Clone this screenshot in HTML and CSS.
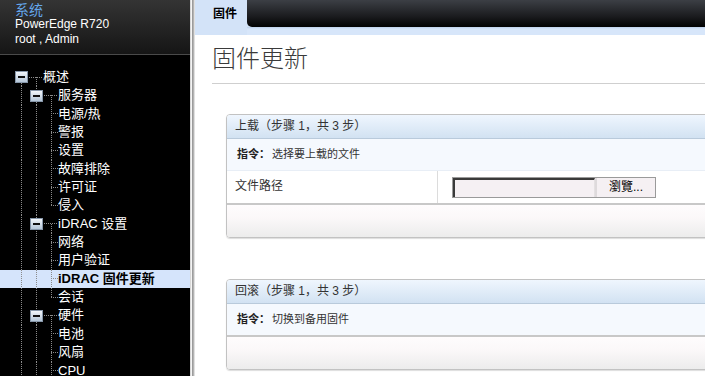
FILE: index.html
```html
<!DOCTYPE html>
<html lang="zh">
<head>
<meta charset="utf-8">
<title>固件更新</title>
<link rel="stylesheet" href="styles.css">
</head>
<body>
<div class="app">
  <aside class="sidebar">
    <div class="sys-head">
      <div class="sys-title">系统</div>
      <div class="sys-line">PowerEdge R720</div>
      <div class="sys-line">root , Admin</div>
    </div>
    <div class="tree">
      <div class="row"><span class="ic bot"><i class="box"></i></span><span class="conn down"></span><span class="lbl">概述</span></div>
      <div class="row"><span class="g v"></span><span class="ic v"><i class="box"></i></span><span class="conn down"></span><span class="lbl">服务器</span></div>
      <div class="row"><span class="g v"></span><span class="g v"></span><span class="lf v"></span><span class="lbl">电源/热</span></div>
      <div class="row"><span class="g v"></span><span class="g v"></span><span class="lf v"></span><span class="lbl">警报</span></div>
      <div class="row"><span class="g v"></span><span class="g v"></span><span class="lf v"></span><span class="lbl">设置</span></div>
      <div class="row"><span class="g v"></span><span class="g v"></span><span class="lf v"></span><span class="lbl">故障排除</span></div>
      <div class="row"><span class="g v"></span><span class="g v"></span><span class="lf v"></span><span class="lbl">许可证</span></div>
      <div class="row"><span class="g v"></span><span class="g v"></span><span class="lf end"></span><span class="lbl">侵入</span></div>
      <div class="row"><span class="g v"></span><span class="ic v"><i class="box"></i></span><span class="conn down"></span><span class="lbl">iDRAC 设置</span></div>
      <div class="row"><span class="g v"></span><span class="g v"></span><span class="lf v"></span><span class="lbl">网络</span></div>
      <div class="row"><span class="g v"></span><span class="g v"></span><span class="lf v"></span><span class="lbl">用户验证</span></div>
      <div class="row selected"><span class="g v"></span><span class="g v"></span><span class="lf v"></span><span class="lbl">iDRAC 固件更新</span></div>
      <div class="row"><span class="g v"></span><span class="g v"></span><span class="lf end"></span><span class="lbl">会话</span></div>
      <div class="row"><span class="g v"></span><span class="ic v"><i class="box"></i></span><span class="conn down"></span><span class="lbl">硬件</span></div>
      <div class="row"><span class="g v"></span><span class="g v"></span><span class="lf v"></span><span class="lbl">电池</span></div>
      <div class="row"><span class="g v"></span><span class="g v"></span><span class="lf v"></span><span class="lbl">风扇</span></div>
      <div class="row"><span class="g v"></span><span class="g v"></span><span class="lf v"></span><span class="lbl">CPU</span></div>
    </div>
  </aside>
  <div class="splitter"></div>
  <main class="main">
    <div class="tabbar">
      <div class="tab">固件</div>
      <div class="tabfill"></div>
    </div>
    <div class="content">
      <h1 class="page-title">固件更新</h1>
      <div class="panel">
        <div class="panel-head">上载（步骤 1，共 3 步）</div>
        <div class="instr"><b>指令：</b>选择要上载的文件</div>
        <div class="field-row">
          <div class="field-label">文件路径</div>
          <div class="field-value">
            <span class="file-input"><span class="file-text"></span><span class="file-btn">瀏覽...</span></span>
          </div>
        </div>
        <div class="panel-foot"></div>
      </div>
      <div class="panel second">
        <div class="panel-head">回滚（步骤 1，共 3 步）</div>
        <div class="instr"><b>指令：</b>切换到备用固件</div>
        <div class="panel-foot"></div>
      </div>
    </div>
  </main>
</div>
</body>
</html>
```
FILE: styles.css
```css
* { box-sizing: border-box; }
html, body { margin: 0; padding: 0; height: 100%; }
body {
  font-family: "Liberation Sans", "Noto Sans CJK SC", sans-serif;
  font-size: 12px;
  color: #222;
  background: #fff;
  overflow: hidden;
}
.app { display: flex; height: 376px; }

/* sidebar */
.sidebar { width: 190px; flex: none; background: #000; color: #fff; }
.sys-head {
  height: 55px;
  padding: 1px 0 0 15px;
  background: linear-gradient(#343434, #151515);
  border-bottom: 1px solid #4a4a4a;
}
.sys-title { font-family: "Noto Sans CJK SC", sans-serif; font-size: 14px; line-height: 16px; color: #64a6ea; }
.sys-line { font-size: 12px; line-height: 15px; color: #fff; }

.tree { padding-top: 13px; }
.row { display: flex; height: 18.35px; padding-left: 15px; align-items: stretch; }
.row .lbl {
  font-family: "Liberation Sans", "Noto Sans CJK SC", sans-serif;
  font-size: 13px;
  line-height: 18.35px;
  color: #fff;
  white-space: nowrap;
}
.row.selected { background: #d5e4fb; }
.row.selected .lbl { color: #000; font-weight: bold; }

.g { width: 15px; flex: none; }
.g.v, .ic.v, .lf.v {
  background: repeating-linear-gradient(to bottom, #8a8a8a 0 1px, transparent 1px 2px) 6px 0 / 1px 100% no-repeat;
}
.ic.bot {
  background: repeating-linear-gradient(to bottom, #8a8a8a 0 1px, transparent 1px 2px) 6px 100% / 1px 50% no-repeat;
}
.ic { width: 13px; flex: none; display: flex; align-items: center; }
.box {
  display: block;
  width: 13px; height: 12px;
  border: 1px solid #8797aa;
  background: linear-gradient(#f2f6fa, #b4c6d8);
  position: relative;
}
.box::after {
  content: "";
  position: absolute;
  left: 2px; right: 2px; top: 4px;
  height: 2px;
  background: #111;
}
.conn {
  width: 15px; flex: none;
  background: repeating-linear-gradient(to right, #8a8a8a 0 1px, transparent 1px 2px) 1px 50% / 14px 1px no-repeat;
}
.conn.down {
  background:
    repeating-linear-gradient(to right, #8a8a8a 0 1px, transparent 1px 2px) 1px 50% / 14px 1px no-repeat,
    repeating-linear-gradient(to bottom, #8a8a8a 0 1px, transparent 1px 2px) 8px 100% / 1px 50% no-repeat;
}
.lf { width: 13px; flex: none; }
.lf.v {
  background:
    repeating-linear-gradient(to bottom, #8a8a8a 0 1px, transparent 1px 2px) 6px 0 / 1px 100% no-repeat,
    repeating-linear-gradient(to right, #8a8a8a 0 1px, transparent 1px 2px) 6px 50% / 7px 1px no-repeat;
}
.lf.end {
  background:
    repeating-linear-gradient(to bottom, #8a8a8a 0 1px, transparent 1px 2px) 6px 0 / 1px 50% no-repeat,
    repeating-linear-gradient(to right, #8a8a8a 0 1px, transparent 1px 2px) 6px 50% / 7px 1px no-repeat;
}

.splitter {
  width: 5px; flex: none;
  background: linear-gradient(to right, #d8d8d8 0 1px, #f4f4f4 1px 2px, #9c9c9c 2px 3px, #b4b4b4 3px 4px, #e0e0e0 4px 5px);
}

/* main */
.main { flex: 1; min-width: 0; overflow: hidden; }
.tabbar { display: flex; height: 35px; background: linear-gradient(#d0e1f6, #d0e1f6 27px, #bcd0ea 27px, #d7e6fa 29px, #d7e6fa); }
.tab {
  width: 52px; flex: none;
  padding-left: 18px;
  font-family: "Noto Sans CJK SC", sans-serif;
  font-weight: bold;
  font-size: 12px;
  line-height: 25px;
  color: #000;
  background: #d3e3f8;
}
.tabfill {
  flex: 1;
  height: 27px;
  background: linear-gradient(#3c3f45, #1b1c1f 60%, #020202);
  border-bottom-left-radius: 5px;
}

.content { padding: 10px 0 0 17px; }
.page-title {
  margin: 0;
  padding-bottom: 14px;
  border-bottom: 1px solid #cfcfcf;
  font-family: "Noto Sans CJK SC", sans-serif;
  font-weight: 300;
  font-size: 24px;
  line-height: 24px;
  color: #3a3a3a;
}

.panel {
  margin: 30px 0 0 14px;
  width: 560px;
  border: 1px solid #c2c2c2;
  border-radius: 4px;
  overflow: hidden;
  box-shadow: 0 1px 1px #ddd;
}
.panel.second { margin-top: 41px; }
.panel-head {
  height: 24px;
  padding-left: 8px;
  border-bottom: 1px solid #b9cadb;
  background: linear-gradient(#eff6fe, #d2e2f2);
  font-size: 12px;
  line-height: 23px;
  color: #333;
}
.instr {
  height: 31px;
  padding-left: 10px;
  background: #f5f9fe;
  font-size: 11px;
  line-height: 31px;
  color: #333;
}
.instr b { color: #222; margin-right: 2px; }
.field-row {
  display: flex;
  height: 33px;
  border-top: 1px solid #e8eef6;
  background: #fff;
}
.field-label {
  width: 211px;
  padding-left: 8px;
  border-right: 1px solid #dcdcdc;
  font-size: 12px;
  line-height: 30px;
  color: #333;
}
.field-value { padding: 6px 0 0 14px; }
.file-input {
  display: flex;
  width: 204px; height: 21px;
  border: 1px solid #9a9a9a;
  background: #f5f0f3;
}
.file-text {
  width: 142px;
  border-top: 2px solid #3a3a3a;
  border-left: 2px solid #3a3a3a;
  border-right: 1px solid #e4e0e2;
  background: #f5f0f3;
}
.file-btn {
  flex: 1;
  border-left: 2px solid #dedadc;
  text-align: center;
  font-size: 12px;
  line-height: 19px;
  color: #000;
}
.panel-foot {
  height: 34px;
  border-top: 2px solid #c8c8c8;
  background: linear-gradient(#fefcfd, #fbf8f9 40%, #ececec);
}
```
